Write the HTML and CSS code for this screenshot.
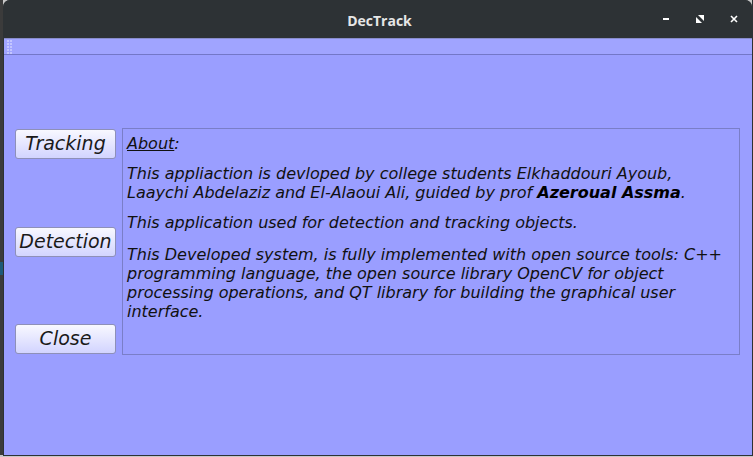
FILE: index.html
```html
<!DOCTYPE html>
<html>
<head>
<meta charset="utf-8">
<link rel="stylesheet" href="styles.css">
</head>
<body>
<div class="desk">
  <div class="edge"><div class="edge-blue"></div></div>
  <div class="window">
    <div class="titlebar">
      <span class="title">DecTrack</span>
      <div class="controls">
        <span class="ctl min"></span>
        <span class="ctl"><svg width="8" height="8" viewBox="0 0 8 8"><path d="M2 0H8V6Z" fill="#fff"/><path d="M0 2V8H6Z" fill="#fff"/></svg></span>
        <span class="ctl"><svg width="8" height="8" viewBox="0 0 8 8"><path d="M1 1L7 7M7 1L1 7" stroke="#fff" stroke-width="1.6"/></svg></span>
      </div>
    </div>
    <div class="toolbar"><div class="handle"></div></div>
    <div class="content">
      <div class="row">
        <div class="buttons">
          <button class="btn">Tracking</button>
          <button class="btn">Detection</button>
          <button class="btn">Close</button>
        </div>
        <div class="about">
          <p class="first"><u>About</u>:</p>
          <p>This appliaction is devloped by college students Elkhaddouri Ayoub,<br>Laaychi Abdelaziz and El-Alaoui Ali, guided by prof <b>Azeroual Assma</b>.</p>
          <p>This application used for detection and tracking objects.</p>
          <p class="last">This Developed system, is fully implemented with open source tools: C++<br>programming language, the open source library OpenCV for object<br>processing operations, and QT library for building the graphical user<br>interface.</p>
        </div>
      </div>
    </div>
  </div>
  <div class="right-edge"></div>
</div>
<div class="bottom"></div>
</body>
</html>
```
FILE: styles.css
```css
html, body {
  margin: 0;
  padding: 0;
  width: 753px;
  height: 457px;
  overflow: hidden;
  background: #c8c8c8;
}
.desk {
  display: flex;
  height: 455px;
}
.edge {
  width: 3px;
  background: #3b3b3b;
  padding-top: 262px;
  box-sizing: border-box;
}
.edge-blue {
  height: 13px;
  background: #1d5a78;
}
.window {
  width: 749px;
  display: flex;
  flex-direction: column;
  background: #2d3235;
  border-radius: 7px 7px 0 0;
  overflow: hidden;
}
.titlebar {
  height: 38px;
  flex: none;
  position: relative;
  display: flex;
  align-items: center;
  justify-content: center;
  background: #2d3235;
}
.title {
  font-family: "Open Sans", "Liberation Sans", sans-serif;
  font-weight: 700;
  font-size: 14px;
  color: #e6e6e6;
  margin-left: 4px;
  margin-top: 2px;
}
.controls {
  position: absolute;
  right: 14px;
  top: 15px;
  display: flex;
  gap: 26px;
}
.ctl {
  width: 8px;
  height: 8px;
  display: flex;
  align-items: center;
  justify-content: center;
}
.ctl.min::before {
  content: "";
  width: 6px;
  height: 2px;
  background: #fff;
}
.toolbar {
  height: 15px;
  flex: none;
  background: #a0a4ff;
  border-top: 1px solid #888ccc;
  border-bottom: 1px solid #7377c8;
  box-shadow: 0 1px 0 #acb0ff;
  margin-left: 1px;
  padding-left: 3px;
  display: flex;
  align-items: center;
}
.handle {
  width: 6px;
  height: 14px;
  background-image: radial-gradient(circle at 1px 1px, #c4c6ff 0.7px, transparent 1px);
  background-size: 3px 3px;
}
.content {
  flex: 1;
  background: #9a9eff;
  margin-left: 1px;
  padding: 73px 11px 0 11px;
}
.row {
  display: flex;
  gap: 6px;
  height: 227px;
}
.buttons {
  width: 101px;
  display: flex;
  flex-direction: column;
  justify-content: space-between;
  padding: 1px 0;
}
.btn {
  height: 30px;
  border: 1px solid #8e90b8;
  border-radius: 3px;
  background: linear-gradient(#f8f8ff, #d2d4ff);
  font-family: "DejaVu Sans", sans-serif;
  font-style: italic;
  font-size: 19px;
  color: #1a1a1a;
  padding: 0 0 2px 0;
  line-height: 24px;
}
.about {
  width: 618px;
  box-sizing: border-box;
  border: 1px solid #7a7ec8;
  padding: 3px 4px;
  font-family: "DejaVu Sans", sans-serif;
  font-style: italic;
  font-size: 16px;
  line-height: 19px;
  color: #111;
  white-space: nowrap;
}
.about p {
  margin: 11px 0 0 0;
}
.about p.first {
  margin-top: 2px;
}
.about p.last {
  margin-top: 13px;
}
.about b {
  font-weight: 700;
  color: #000;
}
.right-edge {
  width: 1px;
  background: #2d3235;
}
.bottom {
  height: 2px;
  border-top: 1px solid #2d3235;
  margin-left: 3px;
  background: #c8c8c8;
}
```
